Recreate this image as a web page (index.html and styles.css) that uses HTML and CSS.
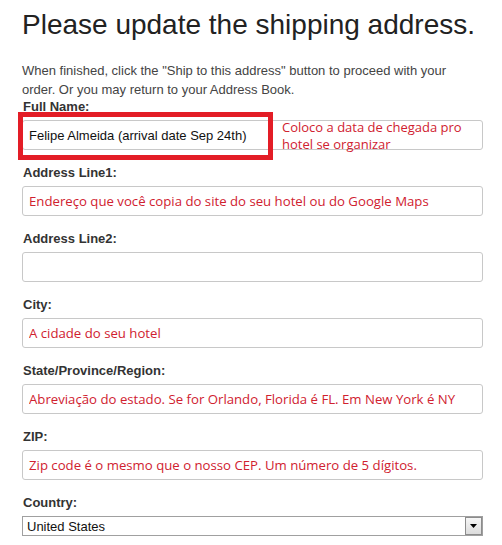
FILE: index.html
```html
<!DOCTYPE html>
<html>
<head>
<meta charset="utf-8">
<link rel="stylesheet" href="styles.css">
</head>
<body>
<div class="page">
  <h1 class="title">Please update the shipping address.</h1>
  <p class="intro">When finished, click the "Ship to this address" button to proceed with your order. Or you may return to your Address Book.</p>
  <form class="form">
    <div class="field first">
      <label class="label">Full Name:</label>
      <div class="box">
        <input class="input" type="text" value="Felipe Almeida (arrival date Sep 24th)">
        <div class="note">Coloco a data de chegada pro<br>hotel se organizar</div>
        <div class="highlight"></div>
      </div>
    </div>
    <div class="field">
      <label class="label">Address Line1:</label>
      <input class="input hint" type="text" value="Endereço que você copia do site do seu hotel ou do Google Maps">
    </div>
    <div class="field">
      <label class="label">Address Line2:</label>
      <input class="input" type="text" value="">
    </div>
    <div class="field">
      <label class="label">City:</label>
      <input class="input hint" type="text" value="A cidade do seu hotel">
    </div>
    <div class="field">
      <label class="label">State/Province/Region:</label>
      <input class="input hint" type="text" value="Abreviação do estado. Se for Orlando, Florida é FL. Em New York é NY">
    </div>
    <div class="field">
      <label class="label">ZIP:</label>
      <input class="input hint" type="text" value="Zip code é o mesmo que o nosso CEP. Um número de 5 dígitos.">
    </div>
    <div class="field">
      <label class="label">Country:</label>
      <div class="select">
        <span class="select-value">United States</span>
        <span class="select-btn"><svg width="7" height="4" viewBox="0 0 7 4"><path d="M0 0H7L3.5 4Z" fill="#000"/></svg></span>
      </div>
    </div>
  </form>
</div>
</body>
</html>
```
FILE: styles.css
```css
html, body {
  margin: 0;
  padding: 0;
  background: #fff;
}
.page {
  padding: 0 19px 0 22px;
  font-family: "Liberation Sans", Arial, sans-serif;
  color: #333;
}
.title {
  margin: 8px 0 0;
  font-size: 28px;
  line-height: 34px;
  font-weight: normal;
  color: #222;
}
.intro {
  margin: 19px 0 0;
  max-width: 440px;
  font-size: 13px;
  line-height: 19px;
  color: #444;
}
.form {
  margin: 0;
}
.field {
  margin-top: 15px;
}
.field.first {
  margin-top: 0;
}
.label {
  display: block;
  font-size: 13px;
  line-height: 16px;
  font-weight: bold;
  color: #333;
  margin-bottom: 5px;
  padding-left: 1px;
}
.box {
  position: relative;
}
.input {
  display: block;
  box-sizing: border-box;
  width: 461px;
  height: 30px;
  margin: 0;
  padding: 0 6px;
  border: 1px solid #c8c8c8;
  border-radius: 3px;
  font-family: "Liberation Sans", Arial, sans-serif;
  font-size: 13px;
  color: #111;
  background: #fff;
  outline: none;
}
.input.hint {
  font-family: "Open Sans", sans-serif;
  font-size: 13.2px;
  color: #d0212f;
}
.note {
  position: absolute;
  left: 260px;
  top: -1px;
  font-family: "Open Sans", sans-serif;
  font-size: 13px;
  line-height: 17px;
  color: #d0212f;
}
.highlight {
  position: absolute;
  left: -4px;
  top: -8px;
  width: 245px;
  height: 38px;
  border: 5px solid #e31d26;
}
.select {
  box-sizing: border-box;
  width: 461px;
  height: 20px;
  border: 1px solid #a0a0a0;
  display: flex;
  align-items: center;
  justify-content: space-between;
  font-size: 13px;
  color: #111;
}
.select-value {
  padding-left: 4px;
}
.select-btn {
  box-sizing: border-box;
  width: 17px;
  height: 18px;
  border: 1px solid #8c8c8c;
  background: linear-gradient(#f6f6f6, #dcdcdc);
  display: flex;
  align-items: center;
  justify-content: center;
}
```
